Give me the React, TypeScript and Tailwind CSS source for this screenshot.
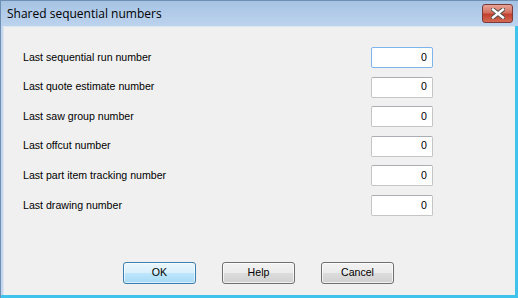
const rows = [
  "Last sequential run number",
  "Last quote estimate number",
  "Last saw group number",
  "Last offcut number",
  "Last part item tracking number",
  "Last drawing number",
];

function CloseButton() {
  return (
    <div
      className="
        flex
        h-[19px]
        w-[31px]
        items-center
        justify-center
        rounded-[3px]
        border
        border-[#7a3a3a]
        bg-[linear-gradient(#e8a597,#d2705f_45%,#c2402d_55%,#d46b55)]
      "
    >
      <svg width="14" height="11" viewBox="0 0 14 11">
        <path
          d="M2 1.5 L12 9.5 M12 1.5 L2 9.5"
          stroke="#4a4a4a"
          strokeWidth="4.2"
          strokeLinecap="square"
        />
        <path
          d="M2 1.5 L12 9.5 M12 1.5 L2 9.5"
          stroke="#ffffff"
          strokeWidth="2.4"
          strokeLinecap="square"
        />
      </svg>
    </div>
  );
}

function NumberBox({ focused }: { focused?: boolean }) {
  return (
    <div
      className={
        focused
          ? "flex h-[21px] w-[62px] items-center justify-end rounded-[2px] border border-[#7eb4ea] bg-white pr-[5px]"
          : "flex h-[21px] w-[62px] items-center justify-end rounded-[2px] border border-[#c5c5c5] border-t-[#abadb3] bg-white pr-[5px]"
      }
    >
      0
    </div>
  );
}

function DialogButton({ label, primary }: { label: string; primary?: boolean }) {
  return (
    <div
      className={
        primary
          ? "flex h-[22px] w-[73px] items-center justify-center rounded-[3px] border border-[#3c7fb1] bg-[linear-gradient(#eaf6fd,#d9f0fc_50%,#bee6fd_50%,#a7d9f5)] shadow-[inset_0_0_0_1px_rgba(255,255,255,.6)]"
          : "flex h-[22px] w-[73px] items-center justify-center rounded-[3px] border border-[#707070] bg-[linear-gradient(#f2f2f2,#ebebeb_50%,#dddddd_50%,#cfcfcf)] shadow-[inset_0_0_0_1px_rgba(255,255,255,.7)]"
      }
    >
      {label}
    </div>
  );
}

export default function App() {
  return (
    <div
      className="
        flex
        h-[298px]
        w-[518px]
        flex-col
        border-l
        border-t
        border-[#6d8fb3]
        bg-[#c4d7ee]
        font-['Liberation_Sans',sans-serif]
        text-[10.6px]
        text-black
      "
    >
      {/* Title bar */}
      <div
        className="
          flex
          h-[25px]
          shrink-0
          items-center
          justify-between
          bg-[linear-gradient(#a7c3e3,#bcd3ee)]
          pl-[6px]
          pr-[5px]
        "
      >
        <span className="font-['Open_Sans',sans-serif] text-[12px] leading-none text-black">
          Shared sequential numbers
        </span>
        <CloseButton />
      </div>

      {/* Frame */}
      <div className="flex flex-1 border-b-[3px] border-r-[3px] border-[#3fc3ec] pl-[2px]">
        <div className="flex flex-1 flex-col border-l border-t border-[#dde6f1] bg-[#f0f0f0]">
          <div className="flex flex-col gap-[8.6px] pl-[19px] pr-[82px] pt-[20px]">
            {rows.map((label, i) => (
              <div key={label} className="flex h-[21px] items-center justify-between">
                <span>{label}</span>
                <NumberBox focused={i === 0} />
              </div>
            ))}
          </div>

          <div className="mt-auto flex justify-center gap-[26px] pb-[11px] pr-[2px]">
            <DialogButton label="OK" primary />
            <DialogButton label="Help" />
            <DialogButton label="Cancel" />
          </div>
        </div>
      </div>
    </div>
  );
}
